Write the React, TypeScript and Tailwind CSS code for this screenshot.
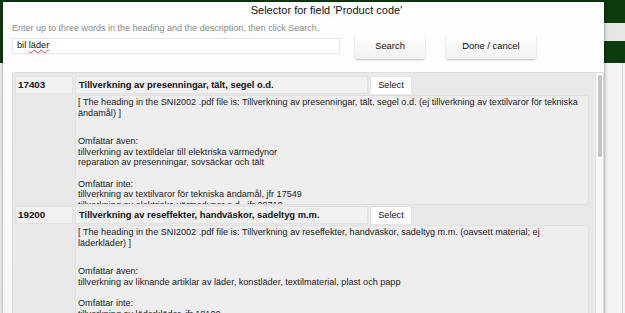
import React from 'react';

type Entry = {
  code: string;
  heading: string;
  intro: string;
  also: string[];
  not: string[];
};

const ENTRIES: Entry[] = [
  {
    code: '17403',
    heading: 'Tillverkning av presenningar, tält, segel o.d.',
    intro:
      '[ The heading in the SNI2002 .pdf file is: Tillverkning av presenningar, tält, segel o.d. (ej tillverkning av textilvaror för tekniska ändamål) ]',
    also: [
      'tillverkning av textildelar till elektriska värmedynor',
      'reparation av presenningar, sovsäckar och tält',
    ],
    not: [
      'tillverkning av textilvaror för tekniska ändamål, jfr 17549',
      'tillverkning av elektriska värmedynor o.d., jfr 29719',
    ],
  },
  {
    code: '19200',
    heading: 'Tillverkning av reseffekter, handväskor, sadeltyg m.m.',
    intro:
      '[ The heading in the SNI2002 .pdf file is: Tillverkning av reseffekter, handväskor, sadeltyg m.m. (oavsett material; ej läderkläder) ]',
    also: ['tillverkning av liknande artiklar av läder, konstläder, textilmaterial, plast och papp'],
    not: ['tillverkning av läderkläder, jfr 18100'],
  },
];

function EntryRow({ entry }: { entry: Entry }) {
  return (
    <div className="grid grid-cols-[58px_293px_42px] gap-x-[2px] gap-y-[1px]">
      <div className="h-[18px] flex items-center pl-[2px] font-bold text-[9.8px] text-[#111] bg-[#f1f1f1] border border-[#e2e2e2]">
        {entry.code}
      </div>
      <div className="h-[18px] flex items-center pl-[3px] font-bold text-[9.4px] text-[#111] bg-[#f1f1f1] border border-[#e2e2e2]">
        {entry.heading}
      </div>
      <div className="h-[18px] flex items-center justify-center text-[9.2px] text-[#111] bg-white rounded-t-[3px] border border-b-0 border-[#e4e4e4]">
        Select
      </div>
      <div />
      <div className="col-span-2 w-[514px] h-[110px] overflow-hidden pl-[2px] pr-[4px] pt-px text-[9.1px] leading-[10.5px] text-[#1a1a1a] bg-[#eeeeee] border border-[#e0e0e0] rounded-[3px]">
        <div>{entry.intro}</div>
        <div className="mt-[18px]">Omfattar även:</div>
        {entry.also.map((l) => (
          <div key={l}>{l}</div>
        ))}
        <div className="mt-[11px]">Omfattar inte:</div>
        {entry.not.map((l) => (
          <div key={l}>{l}</div>
        ))}
      </div>
    </div>
  );
}

export default function App() {
  return (
    <div className="relative w-[625px] h-[313px] overflow-hidden bg-[#f3f4f3] font-['Liberation_Sans',Arial,sans-serif]">
      {/* page behind the dialog */}
      <div className="h-[63px] bg-[#0e3a10] flex flex-col justify-center">
        <div className="h-[18px] bg-[#e6e8e4] ml-[600px]" />
      </div>
      <div className="absolute right-[2px] top-[63px] bottom-0 w-px bg-[#cfd6cc]" />

      {/* dialog */}
      <div className="absolute left-[3px] top-[2px] w-[601px] h-[330px] bg-gradient-to-b from-white to-[#f6f6f6] shadow-[0_0_4px_rgba(0,0,0,0.45)] flex flex-col">
        <div className="h-[16px] pt-[1px] pl-[46px] flex items-center justify-center text-[11px] text-[#111]">
          Selector for field 'Product code'
        </div>
        <div className="pl-[9px] pt-[4px] text-[9px] leading-[12px] text-[#8a8a8a]">
          Enter up to three words in the heading and the description, then click Search.
        </div>
        <div className="flex items-start pl-[9px]">
          <div className="mt-[4px] w-[328px] h-[16px] bg-white border border-[#e6e6e6] flex items-center pl-[4px] text-[9.2px] text-[#111]">
            bil{'\u00a0'}
            <span className="underline decoration-wavy decoration-[#e0463c] decoration-[1px] underline-offset-[1px]">läder</span>
          </div>
          <div className="ml-[15px] w-[70px] h-[25px] rounded-[2px] bg-gradient-to-b from-white to-[#f1f1f1] shadow-[0_1px_2px_rgba(0,0,0,0.25)] flex items-center justify-center text-[9.4px] text-[#111]">
            Search
          </div>
          <div className="ml-[21px] w-[90px] h-[25px] rounded-[2px] bg-gradient-to-b from-white to-[#f1f1f1] shadow-[0_1px_2px_rgba(0,0,0,0.25)] flex items-center justify-center text-[9.4px] text-[#111]">
            Done / cancel
          </div>
        </div>

        {/* result list */}
        <div className="mt-[13px] ml-[9px] w-[592px] flex-1 bg-[#e9e9e9] border border-[#dcdcdc] rounded-tl-[3px] flex">
          <div className="flex-1 pl-[2px] pt-[3px] flex flex-col gap-[1px]">
            {ENTRIES.map((e) => (
              <EntryRow key={e.code} entry={e} />
            ))}
          </div>
          <div className="w-[8px] bg-[#f8f8f8] border-l border-[#e2e2e2] pt-[2px] flex justify-center">
            <div className="w-[4px] h-[82px] rounded-full bg-[#c4c4c4]" />
          </div>
        </div>
      </div>
    </div>
  );
}
